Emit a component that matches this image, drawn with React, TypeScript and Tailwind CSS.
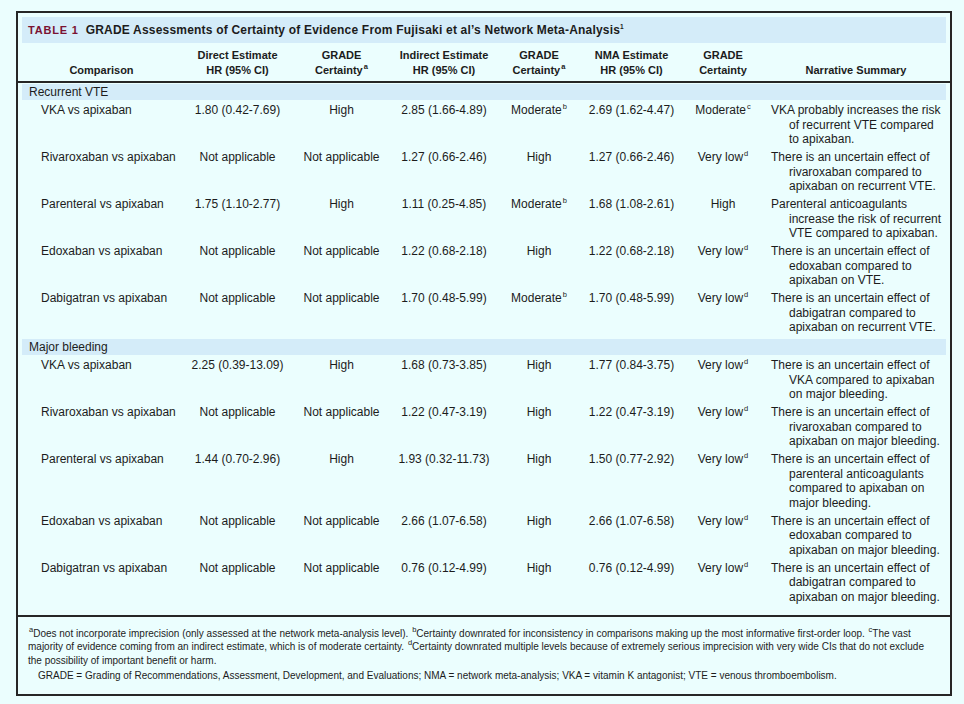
import React from "react";

type Cert = { t: string; s?: string };

type Row = {
  name: string;
  direct: string;
  directCert: Cert;
  indirect: string;
  indirectCert: Cert;
  nma: string;
  nmaCert: Cert;
  summary: string[];
};

const NA: Cert = { t: "Not applicable" };
const HIGH: Cert = { t: "High" };
const MODB: Cert = { t: "Moderate", s: "b" };
const VLOW: Cert = { t: "Very low", s: "d" };

const groups: { label: string; rows: Row[] }[] = [
  {
    label: "Recurrent VTE",
    rows: [
      { name: "VKA vs apixaban", direct: "1.80 (0.42-7.69)", directCert: HIGH, indirect: "2.85 (1.66-4.89)", indirectCert: MODB, nma: "2.69 (1.62-4.47)", nmaCert: { t: "Moderate", s: "c" }, summary: ["VKA probably increases the risk", "of recurrent VTE compared", "to apixaban."] },
      { name: "Rivaroxaban vs apixaban", direct: "Not applicable", directCert: NA, indirect: "1.27 (0.66-2.46)", indirectCert: HIGH, nma: "1.27 (0.66-2.46)", nmaCert: VLOW, summary: ["There is an uncertain effect of", "rivaroxaban compared to", "apixaban on recurrent VTE."] },
      { name: "Parenteral vs apixaban", direct: "1.75 (1.10-2.77)", directCert: HIGH, indirect: "1.11 (0.25-4.85)", indirectCert: MODB, nma: "1.68 (1.08-2.61)", nmaCert: HIGH, summary: ["Parenteral anticoagulants", "increase the risk of recurrent", "VTE compared to apixaban."] },
      { name: "Edoxaban vs apixaban", direct: "Not applicable", directCert: NA, indirect: "1.22 (0.68-2.18)", indirectCert: HIGH, nma: "1.22 (0.68-2.18)", nmaCert: VLOW, summary: ["There is an uncertain effect of", "edoxaban compared to", "apixaban on VTE."] },
      { name: "Dabigatran vs apixaban", direct: "Not applicable", directCert: NA, indirect: "1.70 (0.48-5.99)", indirectCert: MODB, nma: "1.70 (0.48-5.99)", nmaCert: VLOW, summary: ["There is an uncertain effect of", "dabigatran compared to", "apixaban on recurrent VTE."] },
    ],
  },
  {
    label: "Major bleeding",
    rows: [
      { name: "VKA vs apixaban", direct: "2.25 (0.39-13.09)", directCert: HIGH, indirect: "1.68 (0.73-3.85)", indirectCert: HIGH, nma: "1.77 (0.84-3.75)", nmaCert: VLOW, summary: ["There is an uncertain effect of", "VKA compared to apixaban", "on major bleeding."] },
      { name: "Rivaroxaban vs apixaban", direct: "Not applicable", directCert: NA, indirect: "1.22 (0.47-3.19)", indirectCert: HIGH, nma: "1.22 (0.47-3.19)", nmaCert: VLOW, summary: ["There is an uncertain effect of", "rivaroxaban compared to", "apixaban on major bleeding."] },
      { name: "Parenteral vs apixaban", direct: "1.44 (0.70-2.96)", directCert: HIGH, indirect: "1.93 (0.32-11.73)", indirectCert: HIGH, nma: "1.50 (0.77-2.92)", nmaCert: VLOW, summary: ["There is an uncertain effect of", "parenteral anticoagulants", "compared to apixaban on", "major bleeding."] },
      { name: "Edoxaban vs apixaban", direct: "Not applicable", directCert: NA, indirect: "2.66 (1.07-6.58)", indirectCert: HIGH, nma: "2.66 (1.07-6.58)", nmaCert: VLOW, summary: ["There is an uncertain effect of", "edoxaban compared to", "apixaban on major bleeding."] },
      { name: "Dabigatran vs apixaban", direct: "Not applicable", directCert: NA, indirect: "0.76 (0.12-4.99)", indirectCert: HIGH, nma: "0.76 (0.12-4.99)", nmaCert: VLOW, summary: ["There is an uncertain effect of", "dabigatran compared to", "apixaban on major bleeding."] },
    ],
  },
];

const cols = "grid grid-cols-[163px_105px_103px_102px_88px_97px_86px_1fr]";

function Sup({ c }: { c: string }) {
  return <sup className="-top-[5px] ml-[1px] text-[7.5px] leading-none">{c}</sup>;
}

function CertCell({ c }: { c: Cert }) {
  return (
    <div className="text-center">
      {c.t}
      {c.s && <Sup c={c.s} />}
    </div>
  );
}

export default function App() {
  return (
    <div className="min-h-screen w-full bg-[#ebfefe] pl-[16px] pt-[11px] font-['Liberation_Sans',Arial,sans-serif] text-[#1c1c1c]">
      <div className="w-[936px] border-2 border-[#262626]">
        {/* titel */}
        <div className="mx-1 mt-1 flex h-[26px] items-center bg-[#d4ecf9] pl-[6px] font-bold">
          <span className="mr-[7px] text-[11px] tracking-[0.8px] text-[#7a1232]">TABLE 1</span>
          <span className="text-[12px] tracking-[0.2px]">
            GRADE Assessments of Certainty of Evidence From Fujisaki et al’s Network Meta-Analysis
            <sup className="-top-[5px] text-[6.5px]">1</sup>
          </span>
        </div>

        {/* kop */}
        <div className="border-b-2 border-[#262626] px-1">
          <div className={`${cols} items-end pb-[4px] pt-[5px] text-center text-[11px] font-bold leading-[14.5px]`}>
            <div className="pr-[4px]">Comparison</div>
            <div>Direct Estimate<br />HR (95% CI)</div>
            <div>GRADE<br />Certainty<Sup c="a" /></div>
            <div>Indirect Estimate<br />HR (95% CI)</div>
            <div>GRADE<br />Certainty<Sup c="a" /></div>
            <div>NMA Estimate<br />HR (95% CI)</div>
            <div>GRADE<br />Certainty</div>
            <div>Narrative Summary</div>
          </div>
        </div>

        {/* isi */}
        <div className="px-1 pb-[10px] pt-[1px] text-[12px] leading-[14.5px]">
          {groups.map((g, gi) => (
            <div key={g.label} className={gi > 0 ? "mt-[4px]" : ""}>
              <div className="flex h-[16px] items-center bg-[#d4ecf9] pl-[7px]">{g.label}</div>
              {g.rows.map((r) => (
                <div key={r.name} className={`${cols} pb-[0.5px] pt-[3px]`}>
                  <div className="pl-[19px]">{r.name}</div>
                  <div className="text-center">{r.direct}</div>
                  <CertCell c={r.directCert} />
                  <div className="text-center">{r.indirect}</div>
                  <CertCell c={r.indirectCert} />
                  <div className="text-center">{r.nma}</div>
                  <CertCell c={r.nmaCert} />
                  <div className="pl-[5px]">
                    {r.summary.map((line, i) => (
                      <div key={i} className={i > 0 ? "pl-[18px]" : ""}>
                        {line}
                      </div>
                    ))}
                  </div>
                </div>
              ))}
            </div>
          ))}
        </div>

        {/* catatan */}
        <div className="border-t-2 border-[#262626] pb-[12px] pl-[10px] pr-[8px] pt-[10px] text-[10px] leading-[13.5px]">
          <div className="whitespace-nowrap">
            <Sup c="a" />Does not incorporate imprecision (only assessed at the network meta-analysis level). <Sup c="b" />Certainty downrated for inconsistency in comparisons making up the most informative first-order loop. <Sup c="c" />The vast
            <br />
            majority of evidence coming from an indirect estimate, which is of moderate certainty. <Sup c="d" />Certainty downrated multiple levels because of extremely serious imprecision with very wide CIs that do not exclude
            <br />
            the possibility of important benefit or harm.
          </div>
          <div className="mt-[1.5px] pl-[10px]">
            GRADE = Grading of Recommendations, Assessment, Development, and Evaluations; NMA = network meta-analysis; VKA = vitamin K antagonist; VTE = venous thromboembolism.
          </div>
        </div>
      </div>
    </div>
  );
}
